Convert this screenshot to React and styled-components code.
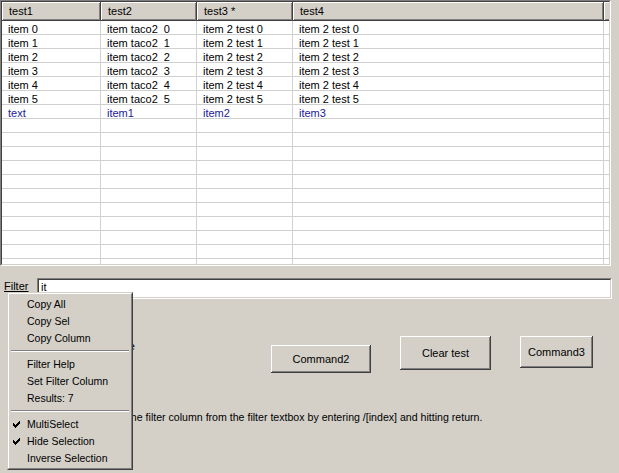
import React from "react";
import styled, { createGlobalStyle } from "styled-components";

const GlobalStyle = createGlobalStyle`
  html, body { margin: 0; padding: 0; background: #d4d0c8; }
  body {
    font-family: "Liberation Sans", Arial, sans-serif;
    font-size: 11px;
    color: #000;
  }
`;

const Form = styled.div`
  position: relative;
  width: 619px;
  height: 473px;
  overflow: hidden;
  display: flex;
  flex-direction: column;
  background: #d4d0c8;
`;

const SunkenOuter = styled.div`
  box-sizing: border-box;
  width: ${(p) => p.$w}px;
  height: ${(p) => p.$h}px;
  border: 1px solid;
  border-color: #808080 #ffffff #ffffff #808080;
  display: flex;
`;

const SunkenInner = styled.div`
  flex: 1;
  min-width: 0;
  border: 1px solid;
  border-color: #404040 #d4d0c8 #d4d0c8 #404040;
  background: #fff;
  display: flex;
  flex-direction: column;
  overflow: hidden;
`;

const HeaderRow = styled.div`
  display: flex;
  height: 19px;
  flex: none;
  background: #d4d0c8;
`;

const HeaderCell = styled.div`
  box-sizing: border-box;
  width: ${(p) => (p.$w ? `${p.$w}px` : "auto")};
  flex: ${(p) => (p.$w ? "none" : "1")};
  height: 19px;
  line-height: 19px;
  padding-left: 7px;
  white-space: pre;
  box-shadow: inset -1px -1px #404040, inset 1px 1px #ffffff, inset -2px -2px #808080;
`;

const Row = styled.div`
  display: flex;
  flex: none;
  height: 14px;
  box-sizing: border-box;
  border-bottom: 1px solid #d0d0d0;
`;

const Cell = styled.div`
  box-sizing: border-box;
  width: ${(p) => (p.$w ? `${p.$w}px` : "auto")};
  flex: ${(p) => (p.$w ? "none" : "1")};
  height: 13px;
  line-height: 16px;
  padding-left: 6px;
  white-space: pre;
  color: ${(p) => p.$color || "#000"};
  border-right: ${(p) => (p.$w ? "1px solid #d0d0d0" : "none")};
`;

const FilterRow = styled.div`
  display: flex;
  align-items: flex-start;
  margin-top: 12px;
  padding-left: 4px;
`;

const FilterLabel = styled.div`
  width: 33px;
  margin-top: 2px;
  line-height: 13px;
  text-decoration: underline;
`;

const TextValue = styled.div`
  padding: 1px 0 0 2px;
  line-height: 13px;
  color: #000;
`;

const ButtonRow = styled.div`
  display: flex;
  align-items: flex-start;
  margin-top: 37px;
`;

const Caption = styled.div`
  width: ${(p) => p.$w}px;
  margin-left: ${(p) => p.$ml}px;
  margin-top: ${(p) => p.$mt}px;
  line-height: 13px;
  text-align: right;
  white-space: nowrap;
`;

const Button = styled.div`
  box-sizing: border-box;
  width: ${(p) => p.$w}px;
  height: ${(p) => p.$h}px;
  margin-left: ${(p) => p.$ml}px;
  margin-top: ${(p) => p.$mt || 0}px;
  background: #d4d0c8;
  display: flex;
  align-items: center;
  justify-content: center;
  line-height: 13px;
  box-shadow: inset -1px -1px #404040, inset 1px 1px #ffffff, inset -2px -2px #808080;
`;

const HelpText = styled.div`
  margin-top: 38px;
  margin-left: 70px;
  font-size: 10.6px;
  line-height: 13px;
  white-space: nowrap;
`;

const Menu = styled.div`
  position: absolute;
  left: 7px;
  top: 292px;
  width: 126px;
  box-sizing: border-box;
  border: 1px solid;
  border-color: #d4d0c8 #404040 #404040 #d4d0c8;
  background: #d4d0c8;
`;

const MenuInner = styled.div`
  border: 1px solid;
  border-color: #ffffff #808080 #808080 #ffffff;
  padding: 2px 0 1px;
  display: flex;
  flex-direction: column;
`;

const MenuItem = styled.div`
  display: flex;
  align-items: center;
  height: 17px;
  line-height: 17px;
  font-size: 10.5px;
  white-space: nowrap;
`;

const CheckSlot = styled.span`
  width: 18px;
  flex: none;
  display: flex;
  align-items: center;
  padding-left: 4px;
  box-sizing: border-box;
`;

const Separator = styled.div`
  margin: 3px 2px 4px;
  height: 1px;
  background: #808080;
  border-bottom: 1px solid #ffffff;
`;

const Check = () => (
  <svg width="7" height="7" viewBox="0 0 7 7" shapeRendering="crispEdges">
    <rect x="6" y="0" width="1" height="1" fill="#000" />
    <rect x="5" y="1" width="2" height="1" fill="#000" />
    <rect x="0" y="2" width="1" height="1" fill="#000" />
    <rect x="4" y="2" width="3" height="1" fill="#000" />
    <rect x="0" y="3" width="2" height="1" fill="#000" />
    <rect x="3" y="3" width="3" height="1" fill="#000" />
    <rect x="0" y="4" width="5" height="1" fill="#000" />
    <rect x="1" y="5" width="3" height="1" fill="#000" />
    <rect x="2" y="6" width="1" height="1" fill="#000" />
  </svg>
);

const COLS = [99, 96, 96, 311];
const HEADERS = ["test1", "test2", "test3 *", "test4"];

const rows = [0, 1, 2, 3, 4, 5].map((i) => [
  `item ${i}`,
  `item taco2  ${i}`,
  `item 2 test ${i}`,
  `item 2 test ${i}`,
]);

const menuGroups = [
  [
    { label: "Copy All" },
    { label: "Copy Sel" },
    { label: "Copy Column" },
  ],
  [
    { label: "Filter Help" },
    { label: "Set Filter Column" },
    { label: "Results: 7" },
  ],
  [
    { label: "MultiSelect", checked: true },
    { label: "Hide Selection", checked: true },
    { label: "Inverse Selection" },
  ],
];

export default function App() {
  const emptyRows = Array.from({ length: 12 });
  return (
    <>
      <GlobalStyle />
      <Form>
        <SunkenOuter $w={611} $h={266}>
          <SunkenInner>
            <HeaderRow>
              {HEADERS.map((h, i) => (
                <HeaderCell key={h} $w={COLS[i]}>
                  {h}
                </HeaderCell>
              ))}
              <HeaderCell />
            </HeaderRow>
            {rows.map((r, ri) => (
              <Row key={ri}>
                {r.map((c, ci) => (
                  <Cell key={ci} $w={COLS[ci]}>
                    {c}
                  </Cell>
                ))}
                <Cell />
              </Row>
            ))}
            <Row>
              {["text", "item1", "item2", "item3"].map((c, ci) => (
                <Cell key={ci} $w={COLS[ci]} $color="#1a1a9a">
                  {c}
                </Cell>
              ))}
              <Cell />
            </Row>
            {emptyRows.map((_, ri) => (
              <Row key={`e${ri}`}>
                {COLS.map((w, ci) => (
                  <Cell key={ci} $w={w} />
                ))}
                <Cell />
              </Row>
            ))}
          </SunkenInner>
        </SunkenOuter>

        <FilterRow>
          <FilterLabel>Filter</FilterLabel>
          <SunkenOuter $w={575} $h={21}>
            <SunkenInner>
              <TextValue>it</TextValue>
            </SunkenInner>
          </SunkenOuter>
        </FilterRow>

        <ButtonRow>
          <Caption $w={100} $ml={35} $mt={4}>
            Filter mode
          </Caption>
          <Button $w={100} $h={28} $ml={136} $mt={9}>
            Command2
          </Button>
          <Button $w={91} $h={34} $ml={29}>
            Clear test
          </Button>
          <Button $w={73} $h={32} $ml={29}>
            Command3
          </Button>
        </ButtonRow>

        <HelpText>
          You can set the filter column from the filter textbox by entering /[index] and hitting return.
        </HelpText>

        <Menu>
          <MenuInner>
            {menuGroups.map((g, gi) => (
              <React.Fragment key={gi}>
                {gi > 0 && <Separator />}
                {g.map((it) => (
                  <MenuItem key={it.label}>
                    <CheckSlot>{it.checked && <Check />}</CheckSlot>
                    {it.label}
                  </MenuItem>
                ))}
              </React.Fragment>
            ))}
          </MenuInner>
        </Menu>
      </Form>
    </>
  );
}
